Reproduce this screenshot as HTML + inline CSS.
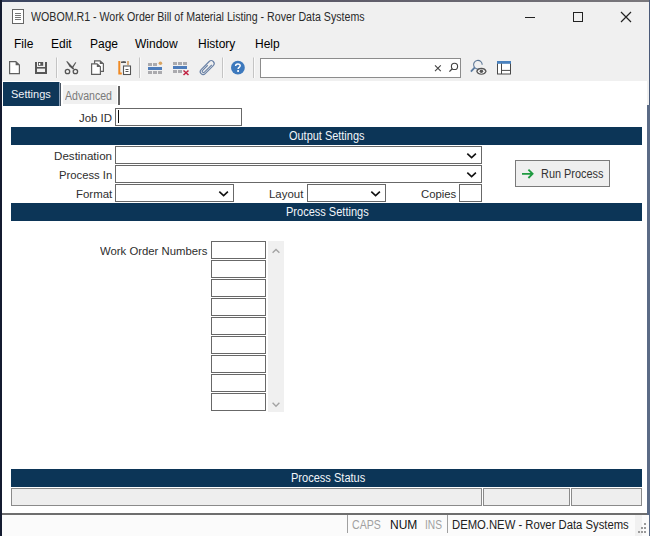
<!DOCTYPE html>
<html><head><meta charset="utf-8">
<style>
*{box-sizing:border-box}
html,body{margin:0;padding:0}
body{width:650px;height:536px;overflow:hidden;position:relative;background:#f0f0f0;font-family:"Liberation Sans",sans-serif;color:#222}
.a{position:absolute}
.t{position:absolute;white-space:pre;transform-origin:0 0;line-height:12px}
.m{color:#000}
.lb{color:#2e2e2e;transform:scaleX(1.04)}
.f11{font-size:11px;line-height:11px}
.f12{font-size:12px;line-height:12px}
.inp{position:absolute;background:#fff;border:1px solid #686868}
.bar{position:absolute;left:11px;width:631px;height:18px;background:#0c3557}
.bar span{position:absolute;color:#f2f6fa;font-size:12px;line-height:12px;white-space:pre;transform-origin:0 0;transform:scaleX(0.905)}
.chev{position:absolute;width:12px;height:8px}
</style></head><body>
<!-- window borders -->
<div class="a" style="left:0;top:0;width:650px;height:2px;background:linear-gradient(90deg,#3a4460,#5c5a68 50%,#7a787c)"></div>
<div class="a" style="left:0;top:0;width:2px;height:536px;background:#141b30"></div>
<div class="a" style="left:649px;top:0;width:1px;height:105px;background:#4a5a78"></div>
<div class="a" style="left:647px;top:105px;width:3px;height:410px;background:#5b6b86"></div>
<div class="a" style="left:649px;top:515px;width:1px;height:21px;background:#5b6b86"></div>

<!-- title bar -->
<svg class="a" style="left:11px;top:8px" width="14" height="17" viewBox="0 0 14 17">
<rect x="1.5" y="1.5" width="11" height="14" fill="#fff" stroke="#666" stroke-width="1"/>
<path d="M4 5.5h6M4 7.5h6M4 9.5h6M4 11.5h6" stroke="#777" stroke-width="1"/>
</svg>
<div class="t f12" style="left:31px;top:11px;transform:scaleX(0.886);color:#2a2a2a">WOBOM.R1 - Work Order Bill of Material Listing - Rover Data Systems</div>
<div class="a" style="left:525px;top:17px;width:10px;height:1px;background:#222"></div>
<div class="a" style="left:573px;top:12px;width:10px;height:10px;border:1px solid #222"></div>
<svg class="a" style="left:620px;top:11px" width="12" height="12" viewBox="0 0 12 12"><path d="M1 1L11 11M11 1L1 11" stroke="#222" stroke-width="1.2"/></svg>

<!-- menu -->
<div class="t f12 m" style="left:14px;top:38px">File</div>
<div class="t f12 m" style="left:51px;top:38px">Edit</div>
<div class="t f12 m" style="left:90px;top:38px">Page</div>
<div class="t f12 m" style="left:135px;top:38px">Window</div>
<div class="t f12 m" style="left:198px;top:38px">History</div>
<div class="t f12 m" style="left:255px;top:38px">Help</div>

<!-- toolbar -->
<svg class="a" style="left:0;top:54px" width="650" height="27" viewBox="0 54 650 27">
<!-- new -->
<path d="M9.6 61.6h6.2l3.6 3.4v8.6h-9.8z" fill="#fff" stroke="#606060" stroke-width="1.2"/>
<path d="M15.6 61.2L19.8 65.2h-4.2z" fill="#606060"/>
<!-- save -->
<g fill="#575757">
<rect x="35" y="62" width="2" height="12"/><rect x="45" y="62" width="2" height="12"/>
<rect x="38" y="62" width="5.2" height="3.8"/>
<rect x="35" y="67" width="12" height="1.6"/><rect x="35" y="72" width="12" height="2"/>
</g>
<rect x="38.9" y="63" width="1.4" height="2" fill="#fff"/>
<!-- sep -->
<rect x="56" y="57.5" width="1" height="20.5" fill="#c4c4c4"/><rect x="57" y="57.5" width="1" height="20.5" fill="#fafafa"/>
<!-- scissors -->
<g fill="#555">
<polygon points="66.2,61.2 67.4,61.2 74.2,68.6 73,69.6 69.4,66.4"/>
<polygon points="76.3,62.4 75.3,62.2 71.6,67.4 72.8,68.2"/>
</g>
<circle cx="67.5" cy="71.5" r="2.2" fill="none" stroke="#555" stroke-width="1.3"/>
<circle cx="75.4" cy="71.5" r="2.2" fill="none" stroke="#555" stroke-width="1.3"/>
<!-- copy -->
<path d="M94.6 60.8h5.4l3.4 3v7.6h-8.8z" fill="#fff" stroke="#606060" stroke-width="1.2"/>
<path d="M99.8 60.5L103.8 64h-4z" fill="#606060"/>
<path d="M91.6 63.8h5.4l3.4 3v7.6h-8.8z" fill="#fff" stroke="#606060" stroke-width="1.2"/>
<path d="M96.8 63.5L100.8 67h-4z" fill="#606060"/>
<!-- paste -->
<path d="M119.3 61v12.5h2.5" fill="none" stroke="#f08a24" stroke-width="2"/>
<path d="M128 61v4" stroke="#d9a060" stroke-width="1.6"/>
<path d="M121.5 62.5q2.2-2.5 4.5 0z" fill="#555"/>
<rect x="121" y="61.5" width="5" height="1.5" fill="#555"/>
<rect x="123.5" y="66" width="7" height="8.5" fill="#fff" stroke="#555" stroke-width="1.1"/>
<path d="M125.5 69.5h3M125.5 71.5h3" stroke="#555" stroke-width="1"/>
<!-- sep -->
<rect x="139" y="57.5" width="1" height="20.5" fill="#c4c4c4"/><rect x="140" y="57.5" width="1" height="20.5" fill="#fafafa"/>
<!-- insert row -->
<g fill="#aaaaae"><rect x="148" y="63" width="4" height="3"/><rect x="153" y="63" width="4" height="3"/>
<rect x="148" y="71" width="4" height="3"/><rect x="153" y="71" width="4" height="3"/><rect x="158" y="71" width="4" height="3"/></g>
<rect x="148" y="67" width="14" height="3" fill="#4c7cbb"/>
<circle cx="160.4" cy="63.2" r="1.8" fill="#d8a462"/>
<!-- delete row -->
<g fill="#aaaaae"><rect x="173" y="62" width="4" height="3"/><rect x="178" y="62" width="4" height="3"/><rect x="183" y="62" width="4" height="3"/>
<rect x="173" y="70" width="4" height="3"/><rect x="178" y="70" width="4" height="3"/></g>
<rect x="173" y="66" width="14" height="3" fill="#4c7cbb"/>
<path d="M183.5 70.5l5 4.5M188.5 70.5l-5 4.5" stroke="#c02040" stroke-width="1.5"/>
<!-- paperclip -->
<g transform="translate(207.2 67.6) rotate(-45)" fill="none" stroke="#6a82a6" stroke-width="1.15">
<rect x="-8.6" y="-2.9" width="17.2" height="5.8" rx="2.9"/>
<path d="M2 -1.3H-5.2A1.3 1.3 0 0 0 -5.2 1.3H5.2"/>
</g>
<!-- sep -->
<rect x="222" y="57.5" width="1" height="20.5" fill="#c4c4c4"/><rect x="223" y="57.5" width="1" height="20.5" fill="#fafafa"/>
<!-- help -->
<circle cx="237.9" cy="67.7" r="6.9" fill="#3d79bd"/>
<path d="M235.6 66C235.6 64.5 236.6 63.9 237.9 63.9C239.3 63.9 240.2 64.7 240.2 65.8C240.2 67.3 238.1 67.4 238.1 69" fill="none" stroke="#fff" stroke-width="1.45"/>
<rect x="237.2" y="70.1" width="1.8" height="1.8" fill="#fff"/>
<!-- sep -->
<rect x="253" y="57.5" width="1" height="20.5" fill="#c4c4c4"/><rect x="254" y="57.5" width="1" height="20.5" fill="#fafafa"/>
<!-- search box -->
<rect x="260.5" y="58.5" width="200" height="19" fill="#fff" stroke="#8c8c8c" stroke-width="1"/>
<path d="M435 65.3l5.8 5.8M440.8 65.3l-5.8 5.8" stroke="#444" stroke-width="1.1"/>
<circle cx="454.5" cy="66.4" r="3.1" fill="none" stroke="#444" stroke-width="1.1"/>
<path d="M452.3 68.7l-2.9 2.9" stroke="#444" stroke-width="1.3"/>
<!-- magnifier eye -->
<path d="M480.05 68.4A4.3 4.3 0 1 1 482.2 64.7" fill="none" stroke="#5a7594" stroke-width="1.1"/>
<path d="M474.8 67.4l-3.9 4.2" stroke="#5b7ba0" stroke-width="1.8"/>
<path d="M476.8 71.3C478.2 67.4 484.6 67.4 486 71.3C484.6 75.2 478.2 75.2 476.8 71.3z" fill="#fafafa" stroke="#555" stroke-width="1.2"/>
<circle cx="481.4" cy="71.3" r="1.8" fill="#555"/>
<!-- table -->
<rect x="497.5" y="61.5" width="13" height="12.5" fill="#fff" stroke="#4a4a4a" stroke-width="1"/>
<rect x="497" y="61" width="14" height="2.8" fill="#4a82be"/>
<path d="M501.5 63.5v10.5M502 70.4h8.5" stroke="#4a4a4a" stroke-width="1"/>
</svg>

<!-- content area -->
<div class="a" style="left:2px;top:81px;width:645px;height:432px;background:#fff"></div>

<!-- tabs -->
<div class="a" style="left:3px;top:82px;width:56px;height:24px;background:#0e3658"></div>
<div class="a" style="left:59px;top:82px;width:1px;height:24px;background:#8ea4bc"></div>
<div class="a" style="left:60px;top:83px;width:1px;height:23px;background:#4a5562"></div>
<div class="t f11" style="left:11px;top:89px;color:#eef3f8">Settings</div>
<div class="a" style="left:63px;top:85px;width:54px;height:19px;background:#f0f0f0"></div>
<div class="a" style="left:118px;top:86px;width:2px;height:19px;background:#626262"></div>
<div class="t f12" style="left:65px;top:90px;color:#7a7a7a;transform:scaleX(0.88)">Advanced</div>

<!-- Job ID -->
<div class="t f11 lb" style="left:79px;top:113px">Job ID</div>
<div class="inp" style="left:115px;top:108px;width:127px;height:18px"></div>
<div class="a" style="left:118px;top:110px;width:1px;height:13px;background:#111"></div>

<!-- Output settings bar -->
<div class="bar" style="top:127px"><span style="left:278px;top:3px;transform:scaleX(0.912)">Output Settings</span></div>

<div class="t f11 lb" style="left:54px;top:151px;transform:scaleX(1.055)">Destination</div>
<div class="inp" style="left:115px;top:146px;width:367px;height:18px"></div>
<svg class="chev" style="left:466px;top:152px" width="12" height="8" viewBox="0 0 12 8"><path d="M1.3 1.6L5.6 5.6L9.9 1.6" fill="none" stroke="#111" stroke-width="1.6"/></svg>
<div class="t f11 lb" style="left:59px;top:170px;transform:scaleX(1.025)">Process In</div>
<div class="inp" style="left:115px;top:165px;width:367px;height:18px"></div>
<svg class="chev" style="left:466px;top:171px" width="12" height="8" viewBox="0 0 12 8"><path d="M1.3 1.6L5.6 5.6L9.9 1.6" fill="none" stroke="#111" stroke-width="1.6"/></svg>
<div class="t f11 lb" style="left:76px;top:189px">Format</div>
<div class="inp" style="left:115px;top:184px;width:119px;height:18px"></div>
<svg class="chev" style="left:218px;top:190px" width="12" height="8" viewBox="0 0 12 8"><path d="M1.3 1.6L5.6 5.6L9.9 1.6" fill="none" stroke="#111" stroke-width="1.6"/></svg>
<div class="t f11 lb" style="left:269px;top:189px">Layout</div>
<div class="inp" style="left:307px;top:184px;width:79px;height:18px"></div>
<svg class="chev" style="left:370px;top:190px" width="12" height="8" viewBox="0 0 12 8"><path d="M1.3 1.6L5.6 5.6L9.9 1.6" fill="none" stroke="#111" stroke-width="1.6"/></svg>
<div class="t f11 lb" style="left:421px;top:189px;transform:scaleX(1.03)">Copies</div>
<div class="inp" style="left:459px;top:184px;width:23px;height:18px"></div>

<!-- run process -->
<div class="a" style="left:515px;top:160px;width:95px;height:27px;background:#efefef;border:1px solid #7a7a7a"></div>
<svg class="a" style="left:520px;top:167px" width="16" height="13" viewBox="0 0 16 13"><path d="M2 6.8h10.5M8.4 2.6l4.2 4.2l-4.2 4.2" fill="none" stroke="#1f9a40" stroke-width="1.8"/></svg>
<div class="t f12" style="left:541px;top:168px;color:#333;transform:scaleX(0.91)">Run Process</div>

<!-- process settings bar -->
<div class="bar" style="top:203px"><span style="left:274.5px;top:3px;transform:scaleX(0.918)">Process Settings</span></div>

<div class="t f11 lb" style="left:100px;top:246px;transform:scaleX(1.03)">Work Order Numbers</div>
<div class="a" style="left:268px;top:241px;width:16px;height:171px;background:#f0f0f0"></div>
<svg class="a" style="left:268px;top:241px" width="16" height="171" viewBox="0 0 16 171">
<path d="M4.6 11.8l3.4-3.4l3.4 3.4" fill="none" stroke="#a4a4a4" stroke-width="1.4"/>
<path d="M4.6 161.8l3.4 3.4l3.4-3.4" fill="none" stroke="#a4a4a4" stroke-width="1.4"/>
</svg>
<div id="wo"></div>
<div class="inp" style="left:211px;top:241px;width:55px;height:18px"></div>
<div class="inp" style="left:211px;top:260px;width:55px;height:18px"></div>
<div class="inp" style="left:211px;top:279px;width:55px;height:18px"></div>
<div class="inp" style="left:211px;top:298px;width:55px;height:18px"></div>
<div class="inp" style="left:211px;top:317px;width:55px;height:18px"></div>
<div class="inp" style="left:211px;top:336px;width:55px;height:18px"></div>
<div class="inp" style="left:211px;top:355px;width:55px;height:18px"></div>
<div class="inp" style="left:211px;top:374px;width:55px;height:18px"></div>
<div class="inp" style="left:211px;top:393px;width:55px;height:18px"></div>

<!-- process status -->
<div class="bar" style="top:469px"><span style="left:279.5px;top:3px;transform:scaleX(0.92)">Process Status</span></div>
<div class="a" style="left:11px;top:488px;width:471px;height:18px;background:#eeeeee;border:1px solid #8a8a8a"></div>
<div class="a" style="left:483px;top:488px;width:87px;height:18px;background:#eeeeee;border:1px solid #8a8a8a"></div>
<div class="a" style="left:571px;top:488px;width:71px;height:18px;background:#eeeeee;border:1px solid #8a8a8a"></div>

<!-- status bar -->
<div class="a" style="left:2px;top:513px;width:645px;height:2px;background:#6e6e6e"></div>
<div class="a" style="left:2px;top:515px;width:647px;height:21px;background:#fbfbfb"></div>
<div class="a" style="left:635px;top:515px;width:7px;height:21px;background:#f1f1f1"></div>
<div class="a" style="left:347px;top:515px;width:1px;height:18px;background:#a0a0a0"></div>
<div class="a" style="left:447px;top:515px;width:1px;height:18px;background:#a0a0a0"></div>
<div class="t f12" style="left:352px;top:519px;color:#a0a0a0;transform:scaleX(0.88)">CAPS</div>
<div class="t f12" style="left:390px;top:519px;color:#111">NUM</div>
<div class="t f12" style="left:425px;top:519px;color:#a0a0a0;transform:scaleX(0.85)">INS</div>
<div class="t f12" style="left:452px;top:519px;color:#222;transform:scaleX(0.94)">DEMO.NEW - Rover Data Systems</div>
<svg class="a" style="left:635px;top:520px" width="14" height="16" viewBox="0 0 14 16">
<g fill="#9a9a9a"><rect x="9" y="3" width="2" height="2"/><rect x="6" y="7" width="2" height="2"/><rect x="9" y="7" width="2" height="2"/><rect x="3" y="11" width="2" height="2"/><rect x="6" y="11" width="2" height="2"/><rect x="9" y="11" width="2" height="2"/></g>
</svg>
</body></html>
